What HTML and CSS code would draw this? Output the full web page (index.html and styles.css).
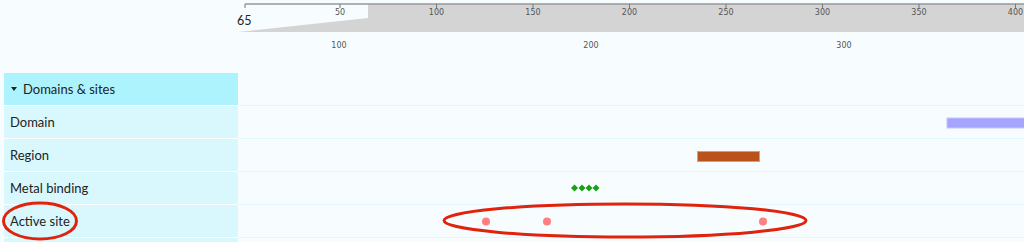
FILE: index.html
```html
<!DOCTYPE html>
<html lang="en">
<head>
  <meta charset="UTF-8">
  <title>Protein features - Domains &amp; sites</title>
  <link rel="stylesheet" href="styles.css">
</head>
<body>
  <div id="viewer">
    <svg class="ruler" width="1024" height="73" viewBox="0 0 1024 73">
      <polygon points="368,4 1024,4 1024,32 238,32 368,18" fill="#d4d4d4"/>
      <line x1="245" y1="4" x2="1024" y2="4" stroke="#999" stroke-width="1.5"/>
      <g stroke="#777" stroke-width="1">
        <line x1="245" y1="4" x2="245" y2="8"/>
        <line x1="340" y1="4" x2="340" y2="8"/>
        <line x1="436.5" y1="4" x2="436.5" y2="8"/>
        <line x1="533" y1="4" x2="533" y2="8"/>
        <line x1="629.5" y1="4" x2="629.5" y2="8"/>
        <line x1="726" y1="4" x2="726" y2="8"/>
        <line x1="822.5" y1="4" x2="822.5" y2="8"/>
        <line x1="919" y1="4" x2="919" y2="8"/>
        <line x1="1015.5" y1="4" x2="1015.5" y2="8"/>
      </g>
      <g class="tick-label" text-anchor="middle">
        <text x="340" y="15">50</text>
        <text x="436.5" y="15">100</text>
        <text x="533" y="15">150</text>
        <text x="629.5" y="15">200</text>
        <text x="726" y="15">250</text>
        <text x="822.5" y="15">300</text>
        <text x="919" y="15">350</text>
        <text x="1015.5" y="15">400</text>
      </g>
      <text class="start-label" x="237" y="25">65</text>
      <g class="tick-label" text-anchor="middle">
        <text x="339" y="48">100</text>
        <text x="591" y="48">200</text>
        <text x="844" y="48">300</text>
      </g>
    </svg>

    <div class="tracks">
      <div class="row header">
        <div class="label"><span class="caret"></span>Domains &amp; sites</div>
        <div class="track"></div>
      </div>
      <div class="row">
        <div class="label">Domain</div>
        <div class="track">
          <svg width="786" height="32">
            <rect x="709" y="12" width="80" height="10" fill="#a5a5ff" stroke="#c4c4ff" stroke-width="1"/>
          </svg>
        </div>
      </div>
      <div class="row">
        <div class="label">Region</div>
        <div class="track">
          <svg width="786" height="32">
            <rect x="459.5" y="12.5" width="62" height="10" fill="#b9521b" stroke="#dc9a78" stroke-width="1"/>
          </svg>
        </div>
      </div>
      <div class="row">
        <div class="label">Metal binding</div>
        <div class="track">
          <svg width="786" height="32">
            <g fill="#1ba01b">
              <polygon points="336.5,12.5 340,16 336.5,19.5 333,16"/>
              <polygon points="344,12.5 347.5,16 344,19.5 340.5,16"/>
              <polygon points="351,12.5 354.5,16 351,19.5 347.5,16"/>
              <polygon points="358,12.5 361.5,16 358,19.5 354.5,16"/>
            </g>
          </svg>
        </div>
      </div>
      <div class="row">
        <div class="label">Active site</div>
        <div class="track">
          <svg width="786" height="32">
            <g fill="#ff7f83">
              <circle cx="248" cy="16.5" r="4"/>
              <circle cx="309" cy="16.5" r="4"/>
              <circle cx="525" cy="16.5" r="4"/>
            </g>
          </svg>
        </div>
      </div>
      <div class="row">
        <div class="label"></div>
        <div class="track"></div>
      </div>
    </div>

    <svg class="marks" width="1024" height="242" viewBox="0 0 1024 242">
      <ellipse cx="625" cy="220.5" rx="181" ry="16.5" fill="none" stroke="#e0230c" stroke-width="3"/>
      <ellipse cx="40" cy="221" rx="36.5" ry="18" fill="none" stroke="#e0230c" stroke-width="3"/>
    </svg>
  </div>
</body>
</html>
```

FILE: styles.css
```css
body {
  margin: 0;
  background-color: #f7fdff;
  font-family: Lato, "Liberation Sans", sans-serif;
  color: #222222;
  overflow: hidden;
}

#viewer {
  position: relative;
  width: 1024px;
  height: 242px;
  overflow: hidden;
}

.ruler {
  display: block;
}

.tick-label {
  font-family: "DejaVu Sans", sans-serif;
  font-size: 8px;
  fill: #555555;
}

.start-label {
  font-family: Lato, sans-serif;
  font-size: 12.5px;
  fill: #222222;
}

.tracks {
  display: flex;
  flex-direction: column;
}

.row {
  display: flex;
  height: 33px;
}

.label {
  width: 228px;
  margin-left: 4px;
  height: 32px;
  padding-left: 6px;
  border-bottom: 1px solid #ffffff;
  background-color: #d8f8fe;
  display: flex;
  align-items: center;
  font-size: 13px;
}

.header .label {
  background-color: #adf3fd;
}

.caret {
  width: 0;
  height: 0;
  border-left: 3.5px solid transparent;
  border-right: 3.5px solid transparent;
  border-top: 4px solid #222222;
  margin-right: 6px;
  margin-left: 1px;
}

.track {
  flex: 1;
  height: 32px;
  border-bottom: 1px solid #e1f8fd;
}

.track svg {
  display: block;
}

/* annotation marks drawn over the chart */
.marks {
  position: absolute;
  left: 0;
  top: 0;
  pointer-events: none;
}
```
